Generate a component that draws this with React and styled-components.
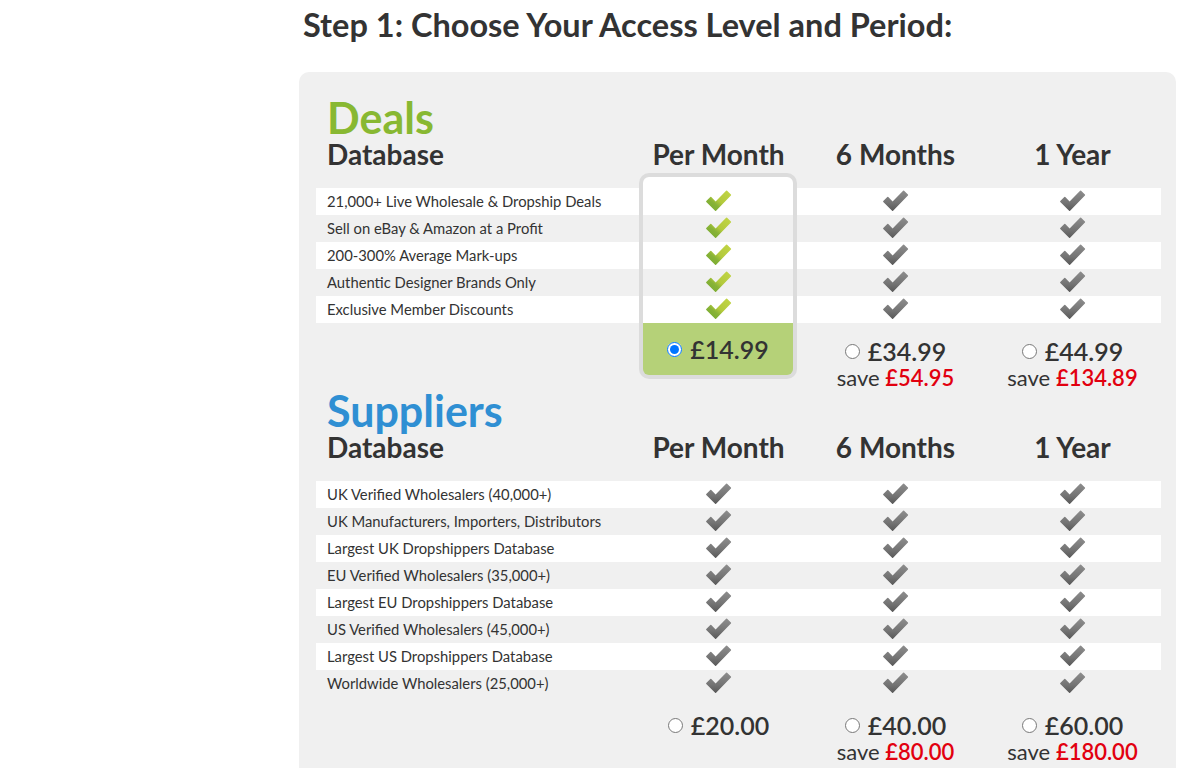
import styled, { createGlobalStyle } from 'styled-components';

const COLS = '314px repeat(3, 177px)';

const GlobalStyle = createGlobalStyle`
  body {
    margin: 0;
    background: #fff;
    font-family: Lato, 'Open Sans', sans-serif;
    color: #333;
  }
`;

const Page = styled.div`
  margin-left: 299px;
  width: 877px;
`;

const Heading = styled.h2`
  margin: 7px 0 0 4px;
  font-size: 32.5px;
  line-height: 36px;
  font-weight: 700;
  color: #333;
`;

const Panel = styled.div`
  margin-top: 29px;
  background: #f0f0f0;
  border-radius: 10px;
  padding: 24px 15px 40px 17px;
`;

const Section = styled.section`
  display: grid;
  grid-template-columns: ${COLS};
`;

const TitleCell = styled.div`
  grid-row: 1;
  grid-column: 1;
  padding: 0 0 5px 11px;
`;

const Brand = styled.div`
  font-size: 43px;
  line-height: 44px;
  font-weight: 700;
  color: ${props => props.$color};
`;

const SubTitle = styled.div`
  font-size: 28px;
  line-height: 28px;
  font-weight: 700;
  color: #333;
`;

const ColHead = styled.div`
  grid-row: 1;
  align-self: end;
  text-align: center;
  font-size: 28px;
  line-height: 28px;
  font-weight: 700;
  color: #333;
  padding-bottom: 5px;
`;

const Spacer = styled.div`
  grid-row: 2;
  grid-column: 1 / -1;
  height: 15px;
`;

const Highlight = styled.div`
  grid-row: ${props => props.$rows};
  grid-column: 2;
  margin: 0 10px 0 9px;
  border: 4px solid #dcdcdc;
  border-bottom: none;
  border-radius: 10px 10px 0 0;
  background: linear-gradient(#fff 0 11px, transparent 11px);
  z-index: 1;
  pointer-events: none;
`;

const FeatureRow = styled.div`
  grid-row: ${props => props.$row};
  grid-column: 1 / -1;
  display: grid;
  grid-template-columns: ${COLS};
  height: 27px;
  background: ${props => (props.$alt ? '#f0f0f0' : '#fff')};
`;

const FeatureText = styled.div`
  padding-left: 11px;
  font-size: 14.8px;
  line-height: 27px;
  color: #333;
  white-space: nowrap;
`;

const CheckCell = styled.div`
  display: flex;
  align-items: center;
  justify-content: center;
  svg {
    display: block;
    margin-top: -2px;
  }
`;

const PriceRow = styled.div`
  grid-row: ${props => props.$row};
  grid-column: 1 / -1;
  display: grid;
  grid-template-columns: ${COLS};
  align-items: start;
`;

const PriceCell = styled.div`
  grid-column: ${props => props.$col};
  display: flex;
  flex-direction: column;
  align-items: center;
  padding-top: 13px;
`;

const ChosenPrice = styled.div`
  grid-column: 2;
  margin: 0 10px 0 9px;
  height: 52px;
  background: #b5d178;
  border: 4px solid #dcdcdc;
  border-top: none;
  border-radius: 0 0 10px 10px;
  display: flex;
  align-items: center;
  justify-content: center;
`;

const PriceLine = styled.label`
  display: flex;
  align-items: center;
  font-size: 25px;
  line-height: 30px;
  font-weight: 600;
  color: #333;
  input {
    width: 15px;
    height: 15px;
    margin: 0 8px 0 0;
  }
`;

const SaveLine = styled.div`
  font-size: 22px;
  line-height: 23px;
  color: #333;
  span {
    color: #e2000f;
    font-weight: 600;
  }
`;

const Check = ({ green }) => {
  const id = green ? 'chk-green' : 'chk-gray';
  return (
    <svg width='27' height='23' viewBox='0 0 27 23'>
      <defs>
        {green ? (
          <linearGradient id={id} x1='1' y1='0' x2='0' y2='1'>
            <stop offset='0' stopColor='#c2d545' />
            <stop offset='0.5' stopColor='#b2c93b' />
            <stop offset='0.66' stopColor='#88b337' />
            <stop offset='1' stopColor='#74a82f' />
          </linearGradient>
        ) : (
          <linearGradient id={id} x1='0' y1='0' x2='0' y2='1'>
            <stop offset='0' stopColor='#8c8c8c' />
            <stop offset='0.6' stopColor='#747474' />
            <stop offset='1' stopColor='#5a5a5a' />
          </linearGradient>
        )}
      </defs>
      <path
        d='M1.8 12.6 L5.8 8.6 L10.6 13.4 L21.6 2.2 L25.4 6 L10.6 21.2 Z'
        fill={`url(#${id})`}
        stroke={`url(#${id})`}
        strokeWidth='1.4'
        strokeLinejoin='round'
      />
    </svg>
  );
};

const plans = ['Per Month', '6 Months', '1 Year'];

const databases = [
  {
    brand: 'Deals',
    color: '#88b832',
    chosen: true,
    features: [
      '21,000+ Live Wholesale & Dropship Deals',
      'Sell on eBay & Amazon at a Profit',
      '200-300% Average Mark-ups',
      'Authentic Designer Brands Only',
      'Exclusive Member Discounts',
    ],
    prices: [
      { price: '£14.99' },
      { price: '£34.99', save: '£54.95' },
      { price: '£44.99', save: '£134.89' },
    ],
  },
  {
    brand: 'Suppliers',
    color: '#2f8fd3',
    chosen: false,
    features: [
      'UK Verified Wholesalers (40,000+)',
      'UK Manufacturers, Importers, Distributors',
      'Largest UK Dropshippers Database',
      'EU Verified Wholesalers (35,000+)',
      'Largest EU Dropshippers Database',
      'US Verified Wholesalers (45,000+)',
      'Largest US Dropshippers Database',
      'Worldwide Wholesalers (25,000+)',
    ],
    prices: [
      { price: '£20.00' },
      { price: '£40.00', save: '£80.00' },
      { price: '£60.00', save: '£180.00' },
    ],
  },
];

const Database = ({ data }) => {
  const n = data.features.length;
  const name = `plan-${data.brand}`;
  return (
    <Section>
      <TitleCell>
        <Brand $color={data.color}>{data.brand}</Brand>
        <SubTitle>Database</SubTitle>
      </TitleCell>
      {plans.map(p => (
        <ColHead key={p}>{p}</ColHead>
      ))}
      <Spacer />
      {data.chosen ? <Highlight $rows={`2 / ${n + 3}`} /> : null}
      {data.features.map((f, i) => (
        <FeatureRow key={f} $row={i + 3} $alt={i % 2 === 1}>
          <FeatureText>{f}</FeatureText>
          <CheckCell>
            <Check green={data.chosen} />
          </CheckCell>
          <CheckCell>
            <Check />
          </CheckCell>
          <CheckCell>
            <Check />
          </CheckCell>
        </FeatureRow>
      ))}
      <PriceRow $row={n + 3}>
        {data.prices.map((p, i) => {
          const line = (
            <PriceLine>
              <input
                type='radio'
                name={name}
                defaultChecked={data.chosen && i === 0}
              />
              {p.price}
            </PriceLine>
          );
          if (data.chosen && i === 0) {
            return <ChosenPrice key={p.price}>{line}</ChosenPrice>;
          }
          return (
            <PriceCell key={p.price} $col={i + 2}>
              {line}
              {p.save ? (
                <SaveLine>
                  save <span>{p.save}</span>
                </SaveLine>
              ) : null}
            </PriceCell>
          );
        })}
      </PriceRow>
    </Section>
  );
};

const App = () => {
  return (
    <Page>
      <GlobalStyle />
      <Heading>Step 1: Choose Your Access Level and Period:</Heading>
      <Panel>
        {databases.map(d => (
          <Database key={d.brand} data={d} />
        ))}
      </Panel>
    </Page>
  );
};

export default App;
